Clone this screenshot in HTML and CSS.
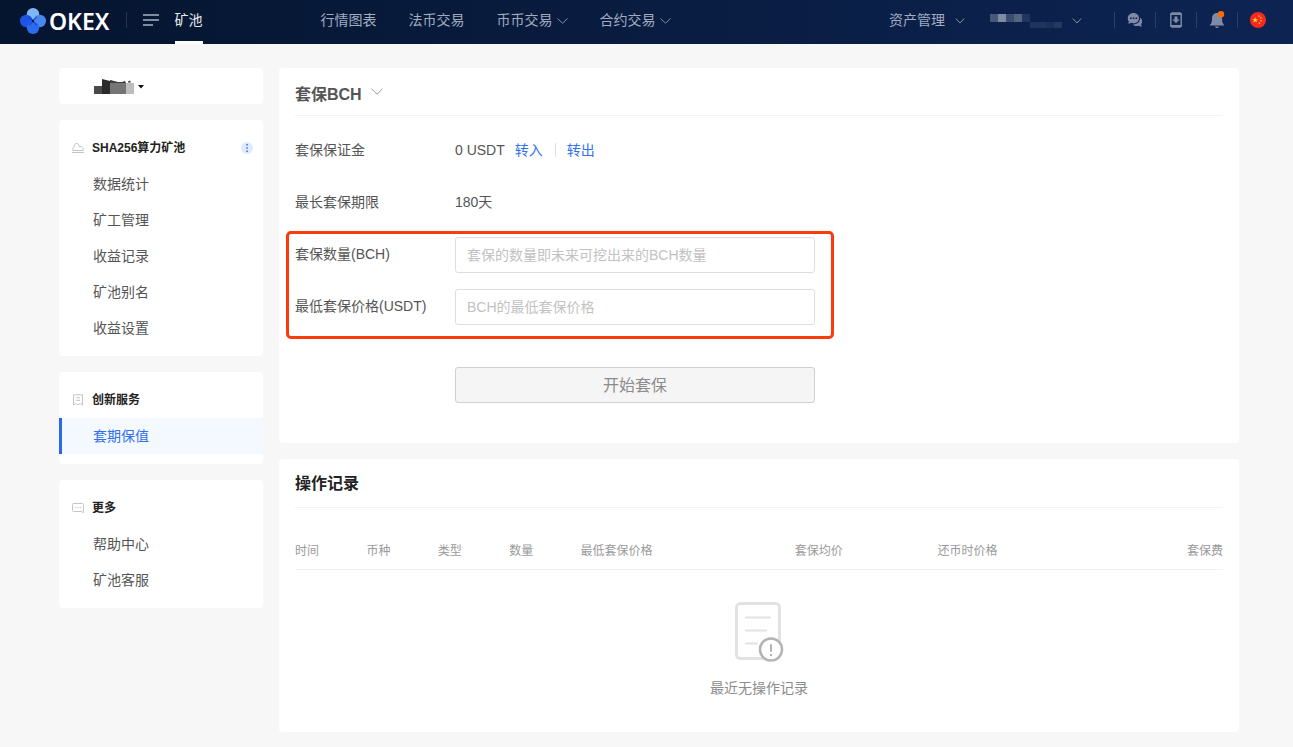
FILE: index.html
```html
<!DOCTYPE html>
<html lang="zh-CN">
<head>
<meta charset="utf-8">
<meta name="viewport" content="width=device-width, initial-scale=1">
<title>OKEX 矿池 - 套期保值</title>
<link rel="stylesheet" href="styles.css">
</head>
<body>
<header class="topbar">
  <a class="logo" href="#">
    <svg width="26" height="28" viewBox="0 0 26 28" aria-hidden="true">
      <circle cx="13" cy="7.200" r="6.200" fill="#7fb6f4"/>
      <circle cx="6.200" cy="14" r="6.200" fill="#1e53e5"/>
      <circle cx="19.800" cy="14" r="6.200" fill="#4a86f0"/>
      <circle cx="13" cy="20.800" r="6.200" fill="#2b6bee"/>
      <path d="M8.500 9.500Q10.500 12.500 12 13L12 15Q10.500 15.500 8.500 18.500Q11 18 12.500 15.500H13.500Q15 18 17.500 18.500Q15.500 15.500 14 15V13Q15.500 12.500 17.500 9.500Q15 10 13.500 12.500H12.500Q11 10 8.500 9.500Z" fill="#173fd0"/>
      <circle cx="13" cy="14" r="1.200" fill="#07183a"/>
    </svg>
    <span>OKEX</span>
  </a>
  <button class="menu-button" type="button" aria-label="菜单">
    <svg width="16" height="14" viewBox="0 0 16 14"><path d="M0 2H16M0 7H16M0 12H10" stroke="currentColor" stroke-width="2"/></svg>
  </button>
  <a class="pool-link" href="#">矿池</a>
  <nav class="nav">
    <a href="#">行情图表</a>
    <a href="#">法币交易</a>
    <a href="#">币币交易<svg class="chevron" width="11" height="6" viewBox="0 0 11 6"><path d="M.5 .5L5.500 5.200L10.500 .5"/></svg></a>
    <a href="#">合约交易<svg class="chevron" width="11" height="6" viewBox="0 0 11 6"><path d="M.5 .5L5.500 5.200L10.500 .5"/></svg></a>
  </nav>
  <div class="account">
    <a class="assets" href="#">资产管理<svg class="chevron" width="10" height="6" viewBox="0 0 10 6"><path d="M.8 .5L5 5L9.200 .5"/></svg></a>
    <button class="user" type="button" aria-label="账户">
      <svg width="72" height="16" viewBox="0 0 72 16">
        <path d="M0 2h8v8H0z" fill="#46587a"/><path d="M8 2h8v8H8z" fill="#7d8ba4"/><path d="M16 2h8v8h-8z" fill="#3b4e72"/><path d="M24 2h8v8h-8z" fill="#53647f"/><path d="M32 2h8v8h-8z" fill="#20355f"/><path d="M40 10h16v6H40z" fill="#20355d"/><path d="M56 10h8v6h-8z" fill="#1b3059"/><path d="M64 10h8v6h-8z" fill="#253960"/>
      </svg>
      <svg class="chevron" width="10" height="6" viewBox="0 0 10 6"><path d="M.8 .5L5 5L9.200 .5"/></svg>
    </button>
    <div class="tools">
      <button type="button" aria-label="消息">
        <svg width="16" height="16" viewBox="0 0 16 16"><path fill="currentColor" d="M6.500 1C9.600 1 12 3.200 12 6.200S9.600 11.200 6.500 11.200C5.600 11.200 4.700 11 4 10.700L1.500 11.900L1.800 9.300C1 8.400.8 7.300.8 6.200C.8 3.200 3.400 1 6.500 1Z"/><path fill="currentColor" d="M13.200 5.500C15.600 7.300 15.600 10.500 14.200 12.100L14.500 15L12 13.800C9.500 14.600 7 13.800 6 12.400C10.300 12.500 13.400 9.700 13.200 5.500Z"/><path d="M3 5.500h1.600v1.500H3zM5.800 5.500h1.600v1.500H5.800zM8.600 5.500h1.600v1.500H8.600z" fill="#0b214b"/></svg>
      </button>
      <button type="button" aria-label="下载">
        <svg width="16" height="16" viewBox="0 0 16 16"><rect x="2.800" y="1" width="10.400" height="14" rx="1.500" fill="none" stroke="currentColor" stroke-width="1.400"/><path fill="currentColor" d="M2.500 1h11v2h-11zM2.500 13h11v2h-11zM6.500 4.500h3v3h2.200L8 11.300L4.300 7.500h2.200z"/></svg>
      </button>
      <button type="button" aria-label="通知">
        <svg width="18" height="18" viewBox="0 0 18 18"><path fill="currentColor" d="M9 2C12.500 2 14 4.500 14 7.500C14 11 14.500 12.500 16.500 14.500H1.500C3.500 12.500 4 11 4 7.500C4 4.500 5.500 2 9 2ZM7 15.500h4Q10.800 17 9 17T7 15.500Z"/><circle cx="13" cy="3.200" r="3.200" fill="#ff6a00"/></svg>
      </button>
      <button type="button" aria-label="语言">
        <svg width="16" height="16" viewBox="0 0 16 16"><circle cx="8" cy="8" r="8" fill="#f5291d"/><path fill="#ffd83b" d="M5.200 5.200L6 7.200H8.100L6.400 8.500L7 10.600L5.200 9.300L3.400 10.600L4 8.500L2.300 7.200H4.400ZM8.200 3.500h1.400v1.200H8.200zM10 5.300h1.400v1.200H10zM10.300 8h1.400v1.200h-1.400zM8.700 10.600h1.400v1.200H8.700z"/></svg>
      </button>
    </div>
  </div>
</header>

<div class="page">
  <aside class="sidebar">
    <button class="card account-picker" type="button" aria-label="选择账户">
      <svg width="51" height="15" viewBox="0 0 51 15">
        <path d="M0 7h8v8H0z" fill="#4a4a4a"/><path d="M8 0l8 2v13H8z" fill="#2b2b2b"/><path d="M16 1l6 2 2 0 2 1 2-1 2 1 2 0v11H16z" fill="#757575"/><path d="M16 1l8 2h4l3-1 1 2H16zM34 2.500l2-1 1 2h-3z" fill="#3e3e3e"/><path d="M32 4h8v11h-8z" fill="#bdbdbd"/><path d="M44 6h6l-3 3.500z" fill="#111"/>
      </svg>
    </button>
    <section class="card menu">
      <h2><svg width="12" height="12" viewBox="0 0 12 12"><path d="M.8 8.500V6.400L2 5.300L2.300 3L4 1.500H5.600L7.600 5L9.200 4.300L11.200 6.300V8.500ZM0 10.500H12"/></svg><span>SHA256算力矿池</span>
        <button class="more" type="button" aria-label="更多操作"><svg width="12" height="12" viewBox="0 0 12 12"><path d="M5.300 2h1.500v1.500H5.300zM5.300 5.200h1.500v1.500H5.300zM5.300 8.400h1.500v1.500H5.300z"/></svg></button></h2>
      <a href="#">数据统计</a>
      <a href="#">矿工管理</a>
      <a href="#">收益记录</a>
      <a href="#">矿池别名</a>
      <a href="#">收益设置</a>
    </section>
    <section class="card menu">
      <h2><svg width="12" height="12" viewBox="0 0 12 12"><path d="M1.500 .8H10.500V11L8.200 9.400L6 11L3.800 9.400L1.500 11ZM4 3.700H8M4 6.300H8"/></svg><span>创新服务</span></h2>
      <a class="active" href="#">套期保值</a>
    </section>
    <section class="card menu">
      <h2><svg width="12" height="12" viewBox="0 0 12 12"><path d="M1.500 1.500H10.500Q11.400 1.500 11.400 2.500V10.800L9.500 9.500H1.500Q.6 9.500 .6 8.500V2.500Q.6 1.500 1.500 1.500ZM3 5.500H4.200M5.400 5.500H6.600M7.800 5.500H9"/></svg><span>更多</span></h2>
      <a href="#">帮助中心</a>
      <a href="#">矿池客服</a>
    </section>
  </aside>

  <main class="main">
    <section class="card panel hedge">
      <h1><button type="button">套保BCH<svg class="chevron" width="12" height="8" viewBox="0 0 12 8"><path d="M.5 .8L6 6.200L11.500 .8"/></svg></button></h1>
      <form>
        <div class="row"><span class="label">套保保证金</span><span>0 USDT</span><span class="transfer"><a href="#">转入</a><a href="#">转出</a></span></div>
        <div class="row"><span class="label">最长套保期限</span><span>180天</span></div>
        <div class="highlight">
          <div class="row"><label class="label" for="amount">套保数量(BCH)</label><input id="amount" type="text" placeholder="套保的数量即未来可挖出来的BCH数量"></div>
          <div class="row"><label class="label" for="price">最低套保价格(USDT)</label><input id="price" type="text" placeholder="BCH的最低套保价格"></div>
        </div>
        <button class="submit" type="submit" disabled>开始套保</button>
      </form>
    </section>

    <section class="card panel records">
      <h2>操作记录</h2>
      <table>
        <thead>
          <tr><th>时间</th><th>币种</th><th>类型</th><th>数量</th><th class="wide">最低套保价格</th><th class="medium">套保均价</th><th class="medium">还币时价格</th><th class="last">套保费</th></tr>
        </thead>
      </table>
      <div class="empty">
        <svg width="50" height="60" viewBox="0 0 50 60" fill="none" stroke-linecap="round">
          <rect x="2.500" y="1.500" width="43" height="55" rx="4" stroke="#e2e2e2" stroke-width="3"/>
          <path d="M12 15.500H36M12 28.500H32M12 41.500H23" stroke="#e2e2e2" stroke-width="2"/>
          <circle cx="37" cy="47.500" r="11" fill="#fff" stroke="#b3b3b3" stroke-width="2.500"/>
          <path d="M37 43V49" stroke="#b3b3b3" stroke-width="2"/><circle cx="37" cy="53" r="1.200" fill="#b3b3b3"/>
        </svg>
        <p>最近无操作记录</p>
      </div>
    </section>
  </main>
</div>
</body>
</html>
```
FILE: styles.css
```css
* {
  box-sizing: border-box;
}

body {
  margin: 0;
  min-height: 100vh;
  background: #f7f7f7;
  color: #555;
  font: 14px/20px "Liberation Sans", "Noto Sans CJK SC", sans-serif;
}

a {
  color: inherit;
  text-decoration: none;
}

button {
  padding: 0;
  border: 0;
  background: none;
  color: inherit;
  font: inherit;
}

svg {
  display: block;
  flex: none;
}

h1,
h2,
p {
  margin: 0;
}

.chevron {
  fill: none;
  stroke: currentColor;
}

/* Top bar */
.topbar {
  display: flex;
  align-items: center;
  height: 44px;
  padding: 0 15px 4px 20px;
  background: linear-gradient(90deg, #05152f, #0d2453);
  color: #a2acbf;
}

.topbar .chevron {
  margin-top: 2px;
  opacity: 0.8;
}

.logo {
  display: flex;
  align-items: center;
  gap: 3px;
  padding-top: 2px;
  color: #fff;
  font: 600 23px/24px "Noto Sans", sans-serif;
}

.menu-button {
  margin-left: 16px;
  padding: 0 16px;
  border-left: 1px solid #26344e;
  color: #818b9e;
}

.menu-button svg {
  margin: 1px 0;
}

.pool-link {
  align-self: stretch;
  display: flex;
  align-items: center;
  margin-bottom: -4px;
  padding-bottom: 1px;
  border-bottom: 3px solid #fff;
  color: #e6eaf0;
}

.nav {
  display: flex;
  gap: 32px;
  margin-left: 118px;
}

.nav a,
.assets,
.user {
  display: flex;
  align-items: center;
  gap: 4px;
}

.account {
  display: flex;
  align-items: center;
  margin-left: auto;
}

.assets,
.user {
  gap: 10px;
}

.user {
  margin: 0 32px 0 25px;
}

.tools {
  display: flex;
  color: #7f8ba5;
}

.tools button {
  display: flex;
  align-items: center;
  justify-content: center;
  width: 41px;
  height: 16px;
  border-left: 1px solid #2c3f66;
}

/* Page */
.page {
  display: flex;
  align-items: flex-start;
  gap: 16px;
  padding: 24px 54px 15px 59px;
}

.card {
  border-radius: 4px;
  background: #fff;
}

.sidebar,
.main {
  display: flex;
  flex-direction: column;
  gap: 16px;
}

.sidebar {
  flex: none;
  width: 204px;
}

.main {
  flex: 1;
  min-width: 0;
}

.account-picker {
  display: flex;
  align-items: center;
  height: 36px;
  padding-left: 35px;
}

.menu {
  padding: 10px 0;
}

.menu h2 {
  display: flex;
  align-items: center;
  gap: 8px;
  height: 36px;
  padding: 0 10px 0 13px;
  color: #222;
  font-size: 12px;
}

.menu h2 > svg {
  fill: none;
  stroke: #c4c4c4;
}

.more {
  margin-left: auto;
  border-radius: 50%;
  background: #dfeafd;
}

.more path {
  fill: #3474ec;
}

.menu a {
  display: block;
  padding: 8px 0 8px 31px;
  border-left: 3px solid transparent;
}

.menu .active {
  border-color: #2b69e6;
  background: #f4f8ff;
  color: #3070ec;
}

.panel {
  padding: 0 16px;
}

.panel h1,
.panel h2 {
  display: flex;
  align-items: center;
  height: 48px;
  border-bottom: 1px solid #f2f2f2;
  font-size: 16px;
}

.hedge {
  padding-bottom: 40px;
}

.panel h1 {
  padding-top: 6px;
}

.panel h1 button {
  display: flex;
  align-items: center;
  gap: 9px;
  font-weight: bold;
}

.panel h1 .chevron {
  margin-bottom: 6px;
  stroke: #999;
}

.hedge form {
  padding-top: 8px;
}

.row {
  display: flex;
  align-items: center;
  height: 52px;
}

.label {
  flex: none;
  width: 160px;
}

.transfer {
  display: flex;
  margin-left: 10px;
  color: #3070ec;
}

.transfer a {
  line-height: 14px;
}

.transfer a + a {
  margin-left: 12px;
  padding-left: 11px;
  border-left: 1px solid #dedee4;
}

.highlight {
  position: relative;
  width: 520px;
}

.highlight::after {
  content: "";
  position: absolute;
  inset: 3px -19px -7px -9px;
  border: 3px solid #fc3b0b;
  border-radius: 5px;
  pointer-events: none;
}

.row input {
  flex: 1;
  min-width: 0;
  height: 36px;
  margin-top: 2px;
  padding: 0 11px;
  border: 1px solid #dedede;
  border-radius: 3px;
  background: #fff;
  color: #505050;
  font: inherit;
}

.row input::placeholder {
  color: #c2c2c2;
}

.submit {
  display: block;
  width: 360px;
  height: 36px;
  margin: 35px 0 0 160px;
  padding-top: 2px;
  border: 1px solid #cfcfcf;
  border-radius: 3px;
  background: #f5f5f5;
  color: #8c8c8c;
  font-size: 16px;
}

.records h2 {
  height: 49px;
  padding-top: 2px;
  color: #222;
}

table {
  width: 100%;
  margin-top: 26px;
  border-collapse: collapse;
  table-layout: fixed;
}

th {
  width: calc(100% / 13);
  height: 35px;
  padding: 0;
  border-bottom: 1px solid #f2f2f2;
  color: #9a9a9a;
  font-size: 12px;
  font-weight: normal;
  text-align: left;
}

.wide {
  width: calc(300% / 13);
}

.medium,
.last {
  width: calc(200% / 13);
}

.last {
  text-align: right;
}

.empty {
  display: flex;
  flex-direction: column;
  align-items: center;
  gap: 16px;
  padding: 32px 0 34px;
  color: #8c8c8c;
}
```
